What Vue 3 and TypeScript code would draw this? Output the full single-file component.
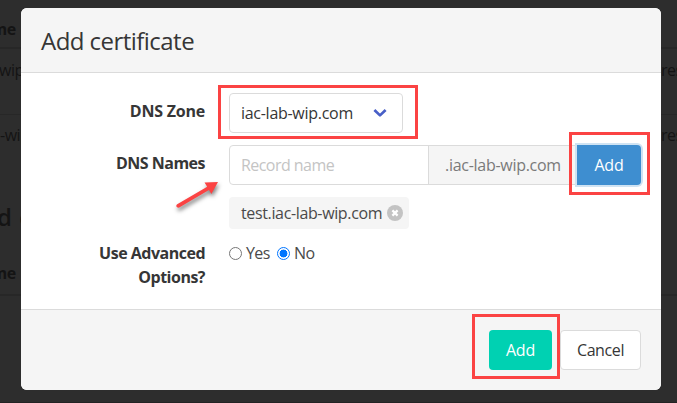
<script setup lang="ts">
import { ref } from 'vue'

const zone = ref('iac-lab-wip.com')
const record = ref('')
const names = ref<string[]>(['test.iac-lab-wip.com'])
const advanced = ref(false)

function addName() {
  if (record.value) names.value.push(`${record.value}.${zone.value}`)
  record.value = ''
}

function removeName(index: number) {
  names.value.splice(index, 1)
}
</script>

<template>
  <div class="screen">
    <div class="page">
      <div class="row head"><b class="clip">me</b></div>
      <div class="row"><span class="wip">wip</span><span class="res">res</span></div>
      <div class="row last"><span class="dash">-wip</span><span class="res">res</span></div>
      <div class="title">d c</div>
      <div class="row second"><b class="clip">me</b></div>
    </div>

    <div class="modal">
      <header><h1>Add certificate</h1></header>
      <section>
        <div class="field">
          <label class="label zone-label">DNS Zone</label>
          <div class="select">
            <span class="zone">{{ zone }}</span>
            <svg width="14" height="10" viewBox="0 0 14 10"><path d="M1.4 2 7 7.4 12.6 2" fill="none" stroke="#485fc7" stroke-width="2.7" stroke-linejoin="round" /></svg>
          </div>
        </div>
        <div class="field">
          <label class="label">DNS Names</label>
          <div class="addons">
            <input v-model="record" placeholder="Record name" />
            <span class="static"><span class="suffix">.{{ zone }}</span></span>
            <button class="info" @click="addName">Add</button>
          </div>
        </div>
        <div class="field">
          <span class="label"></span>
          <div class="tags">
            <span v-for="(name, i) in names" :key="name" class="tag">
              <span class="tag-text">{{ name }}</span>
              <svg class="remove" width="16" height="16" viewBox="0 0 16 16" @click="removeName(i)"><circle cx="8" cy="8" r="8" fill="#c3c3c3" /><path d="M5.4 5.4l5.2 5.2M10.6 5.4l-5.2 5.2" stroke="#fff" stroke-width="2.2" /></svg>
            </span>
          </div>
        </div>
        <div class="field">
          <label class="label options">Use Advanced<br />Options?</label>
          <div class="radios">
            <label class="radio" @click="advanced = true"><i :class="{ on: advanced }"></i><span class="yes">Yes</span></label>
            <label class="radio" @click="advanced = false"><i :class="{ on: !advanced }"></i><span class="no">No</span></label>
          </div>
        </div>
      </section>
      <footer>
        <button class="primary">Add</button>
        <button class="cancel"><span>Cancel</span></button>
      </footer>
    </div>

    <div class="mark mark-zone"></div>
    <div class="mark mark-name"></div>
    <div class="mark mark-submit"></div>
    <svg class="arrow" width="52" height="40" viewBox="0 0 52 40">
      <path d="M7.2 26.2 37.2 8.8 34.5 4.6 48 4 41.4 16 39 12 9.2 29.6Q7.2 30.2 6.4 28.6 6 27 7.2 26.2Z" fill="#fb4343" />
    </svg>
  </div>
</template>

<style>
body { margin: 0; }
</style>

<style scoped>
* { box-sizing: border-box; }
.screen { position: relative; width: 677px; height: 403px; overflow: hidden; padding: 8px 16px 13px 21px; background: #2d2d2d; color: #363636; font: 16px/24px "Open Sans", "Noto Sans", sans-serif; letter-spacing: -0.28px; }
.page { position: absolute; inset: 0; color: #141414; border-bottom: 1px solid #232323; letter-spacing: -0.5px; }
.row { display: flex; justify-content: space-between; height: 66px; padding-top: 9px; border-bottom: 1px solid #272727; }
.row.head { height: 49px; padding-top: 17px; border-bottom-width: 2px; }
.row.last { border: 0; height: 64px; padding-top: 8px; }
.row.second { height: 54px; padding-top: 19px; border-bottom-width: 2px; }
.clip { margin-left: -8.5px; }
.wip { margin-left: -1px; }
.res { width: 16px; }
.title { height: 63px; padding-top: 22px; font-size: 24px; line-height: 32px; font-weight: 600; margin-left: -3px; word-spacing: 2px; }
.modal { position: relative; display: flex; flex-direction: column; width: 640px; height: 382px; border-radius: 6px; overflow: hidden; background: #fff; }
header { height: 65px; padding: 20px; background: #f5f5f5; border-bottom: 1px solid #dbdbdb; }
h1 { margin: 0; font-size: 24px; line-height: 26px; font-weight: 400; letter-spacing: -0.54px; }
section { flex: 1; display: flex; flex-direction: column; gap: 12px; padding: 20px; }
.field { display: flex; gap: 24px; }
.label { width: 164px; padding-top: 6px; text-align: right; font-weight: 700; letter-spacing: -0.5px; }
.label.zone-label { letter-spacing: -0.22px; }
.label.options { padding-top: 0; }
.select { display: flex; align-items: center; justify-content: space-between; width: 174px; height: 40px; padding: 0 15px 0 11px; border: 1px solid #dbdbdb; border-radius: 4px; }
.addons { display: flex; width: 412px; height: 40px; }
input { width: 200px; height: 40px; margin: 0; padding: 0 11px; border: 1px solid #dbdbdb; border-radius: 4px 0 0 4px; outline: 0; font: inherit; letter-spacing: -0.55px; background: #fff; }
input::placeholder { color: #c4c4c4; opacity: 1; }
.static { width: 149px; margin-left: -1px; padding: 7px 15px 7px 16px; border: 1px solid #dbdbdb; background: #f5f5f5; color: #7a7a7a; white-space: nowrap; }
button { height: 40px; padding: 0; border: 0; border-radius: 4px; color: #fff; font: inherit; letter-spacing: -0.2px; }
.info { width: 64px; border-radius: 0 4px 4px 0; background: #3e8ed0; box-shadow: 0 0 0 2px #cfe3f3; }
.tag { display: flex; align-items: center; justify-content: space-between; width: 180px; height: 32px; padding: 0 6px 0 12px; border-radius: 4px; background: #f5f5f5; color: #4a4a4a; white-space: nowrap; letter-spacing: -0.36px; }
.radios { display: flex; gap: 8px; height: 24px; color: #4a4a4a; letter-spacing: -0.6px; }
.radio { display: flex; align-items: center; gap: 4px; }
.yes { width: 23px; }
.radio i { width: 13px; height: 13px; border: 1px solid #767676; border-radius: 50%; }
.radio i.on { border-color: #0075ff; background: radial-gradient(circle, #0075ff 3.7px, #fff 4.2px); }
footer { display: flex; justify-content: flex-end; gap: 8px; height: 81px; padding: 20px; border-top: 1px solid #dbdbdb; background: #f5f5f5; }
.primary { width: 63px; background: #00d1b2; }
.cancel { width: 81px; border: 1px solid #dbdbdb; background: #fff; color: #363636; letter-spacing: -0.4px; }
.mark { position: absolute; border: 3px solid #fb4343; pointer-events: none; }
.mark-zone { left: 218px; top: 85px; width: 200px; height: 54px; }
.mark-name { left: 569px; top: 132px; width: 81px; height: 63px; }
.mark-submit { left: 472px; top: 314px; width: 88px; height: 65px; }
.arrow { position: absolute; left: 170px; top: 178px; filter: drop-shadow(1px 3px 2px rgba(0, 0, 0, 0.5)); pointer-events: none; }
</style>
